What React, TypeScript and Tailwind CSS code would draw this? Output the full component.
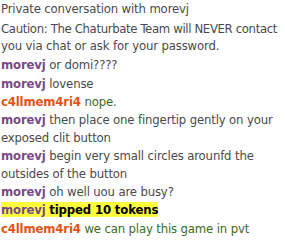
import React from "react";

const P = "text-[#7a4b8a] font-bold";
const O = "text-[#e3531a] font-bold";

export default function App() {
  return (
    <div
      className="w-[285px] h-[250px] bg-white overflow-hidden pl-[1px] text-[13px] leading-[17.5px] tracking-[-0.15px] text-[#4a4a4a]"
      style={{ fontFamily: "Tahoma, 'DejaVu Sans Condensed', 'DejaVu Sans', sans-serif" }}
    >
      <div className="-mt-[1px] py-[0.5px] mb-[1.5px]">Private conversation with morevj</div>
      <div className="py-[0.5px] mb-[0.5px] whitespace-nowrap tracking-[-0.35px]">
        Caution: The Chaturbate Team will NEVER contact
        <br />
        <span className="tracking-[-0.15px]">you via chat or ask for your password.</span>
      </div>
      <div className="py-[0.5px]"><span className={P}>morevj</span> or domi????</div>
      <div className="py-[0.5px]"><span className={P}>morevj</span> lovense</div>
      <div className="py-[0.5px]"><span className={O}>c4llmem4ri4</span> <span className="text-[#3d6b1e]">nope.</span></div>
      <div className="py-[0.4px]"><span className={P}>morevj</span> then place one fingertip gently on your exposed clit button</div>
      <div className="py-[0.4px]"><span className={P}>morevj</span> begin very small circles arounfd the outsides of the button</div>
      <div className="py-[0.4px]"><span className={P}>morevj</span> oh well uou are busy?</div>
      <div className="py-[0.4px]"><span className="bg-[#ffff3c]"><span className={P}>morevj</span> <span className="font-bold text-black">tipped 10 tokens</span></span></div>
      <div className="py-[0.4px]"><span className={O}>c4llmem4ri4</span> <span className="text-[#3d6b1e]">we can play this game in pvt</span></div>
    </div>
  );
}
